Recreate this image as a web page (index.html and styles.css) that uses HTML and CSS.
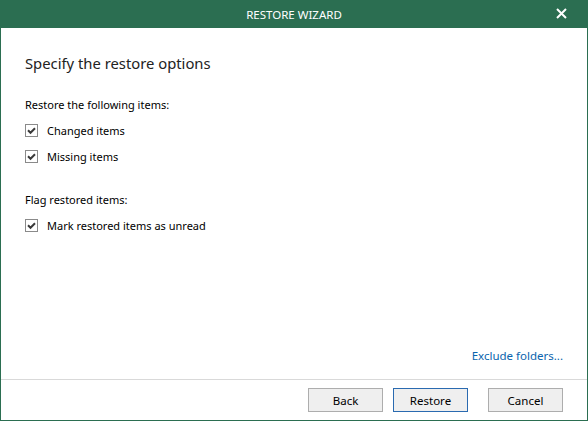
FILE: index.html
```html
<!DOCTYPE html>
<html>
<head>
<meta charset="utf-8">
<link rel="stylesheet" href="styles.css">
</head>
<body>
<div class="window">
  <div class="titlebar">
    <span class="title">RESTORE WIZARD</span>
    <span class="close"><svg width="11" height="11" viewBox="0 0 11 11"><path d="M1 1 L10 10 M10 1 L1 10" stroke="#fff" stroke-width="2" fill="none"/></svg></span>
  </div>
  <div class="content">
    <h1 class="heading">Specify the restore options</h1>
    <div class="group">
      <div class="label">Restore the following items:</div>
      <label class="check"><span class="box"><svg width="11" height="11" viewBox="0 0 11 11"><path d="M2 5.3 L4.5 7.8 L9 3.3" stroke="#3a3a3a" stroke-width="2" fill="none"/></svg></span>Changed items</label>
      <label class="check"><span class="box"><svg width="11" height="11" viewBox="0 0 11 11"><path d="M2 5.3 L4.5 7.8 L9 3.3" stroke="#3a3a3a" stroke-width="2" fill="none"/></svg></span>Missing items</label>
    </div>
    <div class="group">
      <div class="label">Flag restored items:</div>
      <label class="check"><span class="box"><svg width="11" height="11" viewBox="0 0 11 11"><path d="M2 5.3 L4.5 7.8 L9 3.3" stroke="#3a3a3a" stroke-width="2" fill="none"/></svg></span>Mark restored items as unread</label>
    </div>
    <div class="spacer"></div>
    <div class="linkrow"><a class="link">Exclude folders...</a></div>
  </div>
  <div class="footer">
    <button class="btn">Back</button>
    <button class="btn primary">Restore</button>
    <button class="btn cancel">Cancel</button>
  </div>
</div>
</body>
</html>
```
FILE: styles.css
```css
html, body {
  margin: 0;
  padding: 0;
  background: #fff;
}
.window {
  width: 588px;
  height: 421px;
  box-sizing: border-box;
  border: 1px solid #2b6e51;
  border-top: none;
  display: flex;
  flex-direction: column;
  font-family: "Noto Sans", "Open Sans", sans-serif;
  font-size: 11px;
  color: #000;
  background: #fff;
}
.titlebar {
  height: 28px;
  margin: 0 -1px;
  background: #2b6e51;
  color: #fff;
  display: flex;
  align-items: center;
  justify-content: center;
  position: relative;
  flex: none;
}
.title {
  font-size: 11.5px;
}
.close {
  position: absolute;
  right: 21px;
  top: 8px;
  width: 11px;
  height: 11px;
  display: flex;
}
.content {
  flex: 1;
  display: flex;
  flex-direction: column;
  padding: 0 24px 0 24px;
}
.heading {
  font-size: 14.8px;
  font-weight: normal;
  margin: 24px 0 0 0;
  line-height: 22px;
  color: #222;
}
.group {
  display: flex;
  flex-direction: column;
  margin-top: 23px;
}
.group + .group {
  margin-top: 23px;
}
.label {
  line-height: 16px;
  margin-bottom: 4px;
}
.check {
  display: flex;
  align-items: center;
  height: 26px;
}
.box {
  width: 13px;
  height: 13px;
  box-sizing: border-box;
  border: 1px solid #8a8a8a;
  display: flex;
  align-items: center;
  justify-content: center;
  margin-right: 9px;
  background: #fff;
}
.box svg {
  display: block;
}
.spacer {
  flex: 1;
}
.linkrow {
  display: flex;
  justify-content: flex-end;
  padding-bottom: 15px;
}
.link {
  color: #0a64ad;
  line-height: 16px;
  font-size: 11.5px;
}
.footer {
  flex: none;
  height: 41px;
  border-top: 1px solid #d9d9d9;
  display: flex;
  justify-content: flex-end;
  align-items: flex-start;
  padding: 8px 24px 0 0;
  box-sizing: border-box;
}
.btn {
  width: 75px;
  height: 24px;
  box-sizing: border-box;
  border: 1px solid #adadad;
  background: #efefef;
  font-family: inherit;
  font-size: 11.5px;
  color: #000;
  padding: 0;
  margin-left: 10px;
}
.btn.primary {
  border-color: #2a6ab0;
}
.btn.cancel {
  margin-left: 20px;
}
```
